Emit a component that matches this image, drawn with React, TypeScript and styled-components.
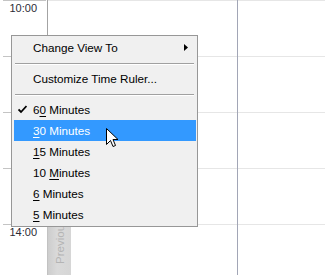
import React from 'react';
import styled, { createGlobalStyle } from 'styled-components';

const GlobalStyle = createGlobalStyle`
  html, body {
    margin: 0;
    padding: 0;
    background: #ffffff;
  }
  body {
    font-family: "Liberation Sans", Arial, sans-serif;
  }
`;

const Screen = styled.div`
  position: relative;
  width: 325px;
  height: 275px;
  overflow: hidden;
  display: grid;
  grid-template-columns: 48px 190px 1fr;
  background: #ffffff;
`;

const Ruler = styled.div`
  border-right: 1px solid #a3a3a3;
  display: flex;
  flex-direction: column;
`;

const RulerSlot = styled.div`
  flex: 0 0 56px;
  margin: 0 1px 0 3px;
  border-top: 1px solid #c4c4c4;
  box-sizing: border-box;
`;

const TimeLabel = styled.div`
  padding: 1px 9px 0 0;
  text-align: right;
  font-size: 11px;
  line-height: 13px;
  color: #2b2b35;
`;

const DayColumn = styled.div<{ $divider?: boolean }>`
  display: flex;
  flex-direction: column;
  border-right: ${(p) => (p.$divider ? '1px solid #a2a6b6' : 'none')};
`;

const DaySlot = styled.div`
  flex: 0 0 56px;
  border-top: 1px solid #e6e6e6;
  box-sizing: border-box;
`;

const PrevTab = styled.div`
  position: absolute;
  left: 47px;
  top: 170px;
  width: 24px;
  height: 120px;
  background: linear-gradient(to right, #cdcdcd, #dadada 40%, #d6d6d6);
  border-left: 1px solid #c2c2c2;
  box-sizing: border-box;
  display: flex;
  flex-direction: column;
  justify-content: flex-end;
  align-items: center;
  padding-bottom: 26px;
`;

const PrevText = styled.span`
  writing-mode: vertical-rl;
  transform: rotate(180deg);
  font-size: 11.5px;
  color: #b4b4b4;
  white-space: nowrap;
`;

const Menu = styled.div`
  position: absolute;
  left: 11px;
  top: 35px;
  width: 187px;
  box-sizing: border-box;
  border: 1px solid #979797;
  background: #f0f0f0;
  padding: 1px 1px 1px 2px;
  display: flex;
  flex-direction: column;
`;

const Item = styled.div<{ $active?: boolean }>`
  position: relative;
  height: 21px;
  display: flex;
  align-items: center;
  padding-left: 19px;
  font-size: 11.7px;
  color: ${(p) => (p.$active ? '#ffffff' : '#000000')};
  background: ${(p) => (p.$active ? '#3399ff' : 'transparent')};
  white-space: pre;
`;

const Label = styled.span`
  white-space: pre;

  u {
    text-decoration-thickness: 1px;
    text-underline-offset: 2px;
  }
`;

const Separator = styled.div`
  height: 10px;
  display: flex;
  align-items: center;
  margin: 0 2px 0 1px;

  &::before {
    content: '';
    flex: 1;
    height: 1px;
    background: #a0a0a0;
    box-shadow: 0 1px 0 #ffffff;
  }
`;

const CheckMark = styled.svg`
  position: absolute;
  left: 4px;
  top: 6px;
`;

const SubArrow = styled.svg`
  position: absolute;
  right: 8px;
  top: 7px;
`;

const Cursor = styled.svg`
  position: absolute;
  left: 106px;
  top: 128px;
`;

// labels of the hours hidden under the open menu are left out
const hours = [
  { id: 10, label: '10:00' },
  { id: 11, label: '' },
  { id: 12, label: '' },
  { id: 13, label: '' },
  { id: 14, label: '14:00' },
];

const scales = [
  { pre: '6', key: '0', post: ' Minutes', checked: true },
  { pre: '', key: '3', post: '0 Minutes', active: true },
  { pre: '', key: '1', post: '5 Minutes' },
  { pre: '10 ', key: 'M', post: 'inutes' },
  { pre: '', key: '6', post: ' Minutes' },
  { pre: '', key: '5', post: ' Minutes' },
];

export default function App() {
  return (
    <>
      <GlobalStyle />
      <Screen>
        <Ruler>
          {hours.map((h) => (
            <RulerSlot key={h.id}>
              {h.label && <TimeLabel>{h.label}</TimeLabel>}
            </RulerSlot>
          ))}
        </Ruler>
        <DayColumn $divider>
          {hours.map((h) => (
            <DaySlot key={h.id} />
          ))}
        </DayColumn>
        <DayColumn>
          {hours.map((h) => (
            <DaySlot key={h.id} />
          ))}
        </DayColumn>

        <PrevTab>
          <PrevText>Previous Appointment</PrevText>
        </PrevTab>

        <Menu>
          <Item>
            <Label>Change View To</Label>
            <SubArrow width="4" height="7" viewBox="0 0 4 7">
              <path d="M0 0 L4 3.5 L0 7 Z" fill="#000" />
            </SubArrow>
          </Item>
          <Separator />
          <Item>
            <Label>Customize Time Ruler...</Label>
          </Item>
          <Separator />
          {scales.map((s, i) => (
            <Item key={i} $active={s.active}>
              {s.checked && (
                <CheckMark width="9" height="9" viewBox="0 0 9 9">
                  <path d="M0.5 4.5 L3 7 L8.5 1" stroke="#000" strokeWidth="1.8" fill="none" />
                </CheckMark>
              )}
              <Label>
                {s.pre}
                <u>{s.key}</u>
                {s.post}
              </Label>
            </Item>
          ))}
        </Menu>

        <Cursor width="13" height="20" viewBox="0 0 13 20">
          <path
            d="M0.5 0.5 L0.5 16.5 L4.5 12.5 L7 18.5 L9.5 17.5 L7 11.5 L12 11.5 Z"
            fill="#ffffff"
            stroke="#000000"
            strokeWidth="1"
            strokeLinejoin="miter"
          />
        </Cursor>
      </Screen>
    </>
  );
}
